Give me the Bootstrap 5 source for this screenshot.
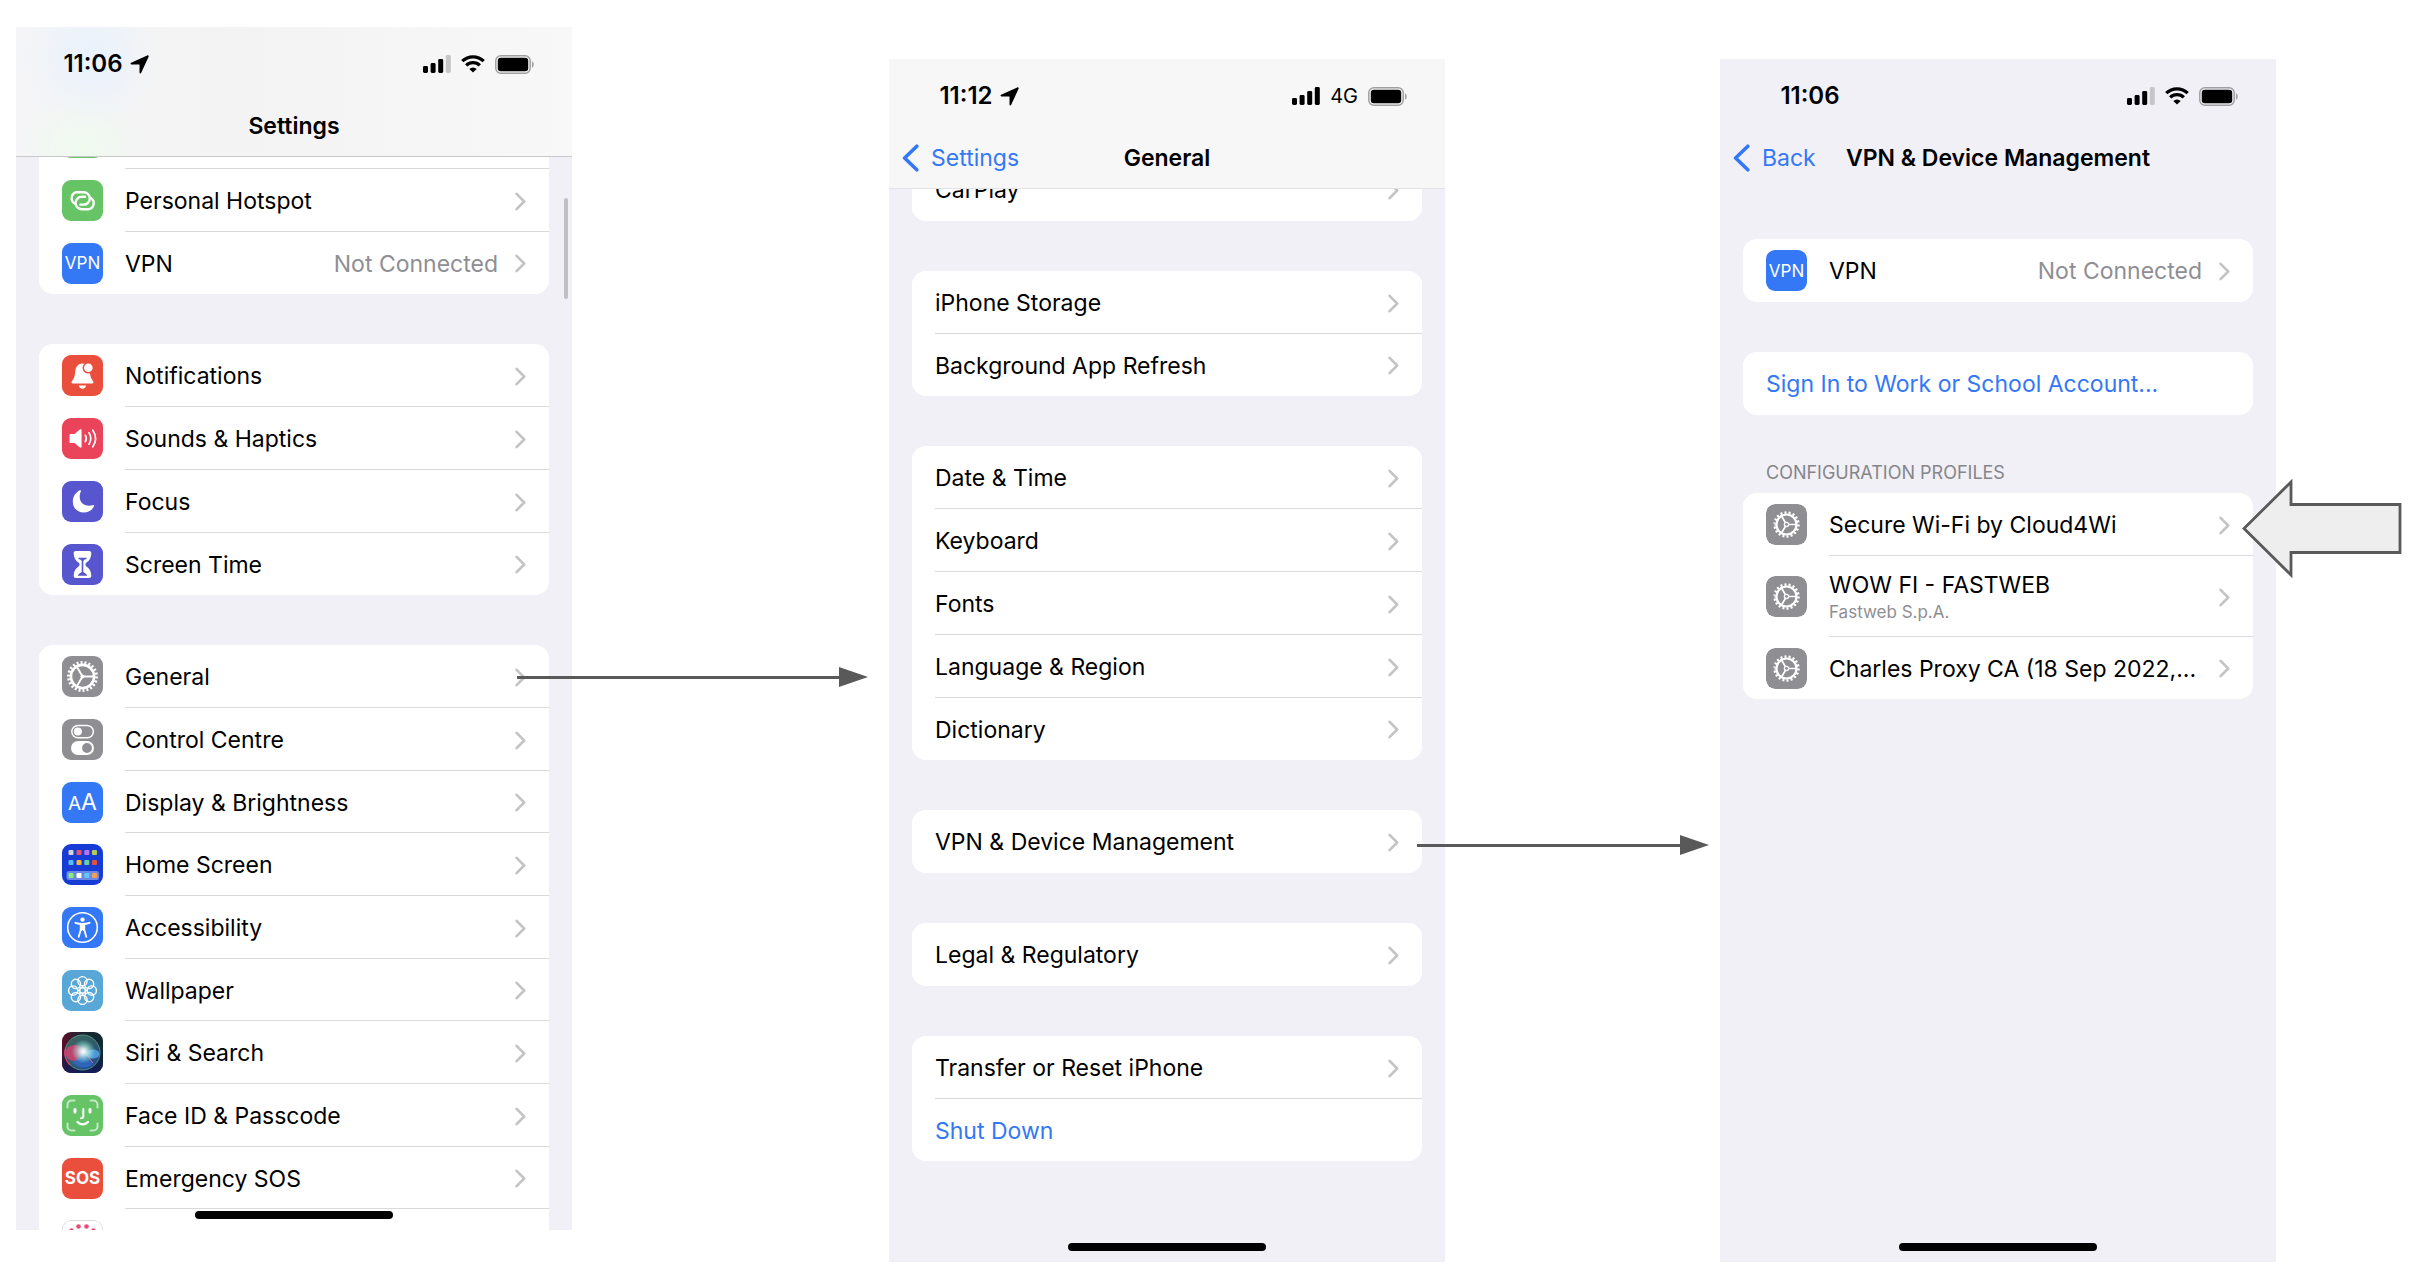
<!DOCTYPE html>
<html lang="en">
<head>
<meta charset="utf-8">
<meta name="viewport" content="width=device-width, initial-scale=1">
<title>VPN &amp; Device Management walkthrough</title>
<link href="https://cdn.jsdelivr.net/npm/bootstrap@5.3.0/dist/css/bootstrap.min.css" rel="stylesheet">
<style>
  :root { --ios-blue: #3478f6; --ios-grey: #8e8e93; --ios-bg: #f1f0f6; --ios-line: #d9d9dc; --ink: #595959; }
  body { font-family: Inter, "Liberation Sans", sans-serif; font-size: 23px; line-height: 30px; color: #000; background: #fff; }
  .flow { display: grid; grid-template-columns: minmax(440px, 556fr) minmax(0, 317fr) minmax(440px, 556fr) minmax(0, 275fr) minmax(440px, 556fr) minmax(0, 142fr); padding: 27px 0 0 16px; align-items: start; }
  .lowered { margin-top: 32px; }
  .phone { aspect-ratio: 390 / 844; background: var(--ios-bg); overflow: hidden; position: relative; }
  .bar { height: 130px; background: #f7f7f7; border-bottom: 1px solid #e3e3e6; }
  .bar-tint { background: radial-gradient(circle at 74px 30px, #e9f2fd 0, rgba(233,242,253,0) 70px), radial-gradient(circle at 66px 122px, #effaee 0, rgba(239,250,238,0) 62px), linear-gradient(90deg, #f5f5f7, #f3f3f3 40%, #f8f8f8); border-bottom-color: #c8c8cb; }
  .bar-plain { background: transparent; border-bottom-color: transparent; }
  .status { height: 74px; padding-right: 37px; }
  .clock { width: 180px; font-size: 24px; font-weight: 600; gap: 7px; }
  .signals { gap: 10px; }
  .nav-row { display: grid; grid-template-columns: 1fr auto 1fr; height: 50px; align-items: center; padding: 0 13px; }
  .nav-title { font-size: 23px; line-height: 30px; font-weight: 600; margin: 0; }
  .back { color: var(--ios-blue); gap: 12px; }
  .sheet { padding: 0 23px; gap: 50px; }
  .sheet-top { padding-top: 50px; }
  .scrolled-far { margin-top: -51px; }
  .scrolled-near { margin-top: -31px; }
  .pane { overflow: hidden; }
  .group { border-radius: 14px; background: #fff; overflow: hidden; }
  .cell { border: 0; padding: 0 0 0 23px; height: 63px; color: #000; background: #fff; gap: 22px; }
  .cell:last-child { height: 62px; }
  .cell:only-child { height: 63px; }
  .long-list .cell:nth-child(3n) { height: 62px; }
  .cell.cell-tall { height: 81px; }
  .cell-body { min-width: 0; border-bottom: 1px solid var(--ios-line); padding: 2px 23px 0 0; gap: 17px; }
  .cell:last-child .cell-body { border-bottom-color: transparent; }
  .value { color: var(--ios-grey); }
  .action { color: var(--ios-blue); }
  .sub { font-size: 17px; line-height: 24px; color: var(--ios-grey); }
  .section-title { font-size: 18px; line-height: 24px; color: #85858b; margin: -4px 0 8px 23px; font-weight: 400; }
  .tile { width: 41px; height: 41px; border-radius: 9px; flex: none; color: #fff; }
  .tile-green { background: #67c466; }
  .tile-vpn { background: #3478f6; font-size: 17px; }
  .tile-aa { background: #3478f6; font-size: 23px; line-height: 41px; }
  .tile-aa span { font-size: 19px; }
  .tile-sos { background: #ea4e3d; font-size: 17px; font-weight: 700; }
  .home { position: absolute; left: 50%; bottom: 11px; width: 198px; height: 8px; margin-left: -99px; border-radius: 4px; background: #000; }
  .scrollbar-thumb { position: absolute; right: 4px; top: 171px; width: 4px; height: 101px; border-radius: 2px; background: #bfbfc4; }
  .net { font-size: 20px; }
  .link-col { position: relative; height: 0; }
  .connector { position: absolute; z-index: 2; }
  .connector i { height: 3px; background: var(--ink); }
  .to-general { left: -55px; right: 21px; top: 640px; }
  .to-vpn { left: -28px; right: 11px; top: 808px; }
  .pointer { position: absolute; z-index: 2; left: -35px; top: 452px; }
  svg { display: block; flex: none; }
</style>
</head>
<body>
<svg width="0" height="0" class="position-absolute" aria-hidden="true">
  <defs>
    <symbol id="chev" viewBox="0 0 11 19"><path d="M1.6 1.8 9.2 9.5 1.6 17.2" fill="none" stroke="#c4c4c7" stroke-width="2.6" stroke-linecap="round" stroke-linejoin="round"/></symbol>
    <symbol id="backchev" viewBox="0 0 17 28"><path d="M14.8 2.2 2.6 14l12.2 11.8" fill="none" stroke="#3478f6" stroke-width="3.6" stroke-linecap="round" stroke-linejoin="round"/></symbol>
    <symbol id="loc" viewBox="0 0 19 19"><path d="M18.3.6c.5.2.5.6.3 1.100L11.200 17.800c-.5 1-1.700.8-1.700-.4V9.800c0-.3-.1-.4-.4-.4H1.500C.3 9.400.1 8.200 1.100 7.700L17.200.4c.4-.2.800-.1 1.100.2Z"/></symbol>
    <symbol id="sig3" viewBox="0 0 28 18"><rect x="0" y="11" width="5" height="7" rx="1.400"/><rect x="7.600" y="8" width="5" height="10" rx="1.400"/><rect x="15.200" y="4" width="5" height="14" rx="1.400"/><rect x="22.800" y="0" width="5" height="18" rx="1.400" fill="#c6c6c8"/></symbol>
    <symbol id="sig4" viewBox="0 0 28 18"><rect x="0" y="11" width="5" height="7" rx="1.400"/><rect x="7.600" y="8" width="5" height="10" rx="1.400"/><rect x="15.200" y="4" width="5" height="14" rx="1.400"/><rect x="22.800" y="0" width="5" height="18" rx="1.400"/></symbol>
    <symbol id="wifi" viewBox="0 0 24 18"><g fill="none" stroke="#000" stroke-width="3.300"><path d="M1.300 6.200a15.200 15.200 0 0 1 21.400 0"/><path d="M5.200 10.400a9.700 9.700 0 0 1 13.600 0"/></g><path d="M12 17.600 8.300 13.900a5.300 5.300 0 0 1 7.400 0Z"/></symbol>
    <symbol id="batt" viewBox="0 0 40 19"><rect x=".8" y=".8" width="34.400" height="17.400" rx="5" fill="none" stroke="#a0a0a2" stroke-width="1.500"/><rect x="2.800" y="2.800" width="30.400" height="13.400" rx="3"/><path d="M37 6.300c2.300.9 2.300 5.500 0 6.400Z" fill="#a0a0a2"/></symbol>
    <symbol id="gear" viewBox="0 0 41 41"><g fill="none" stroke="#fff"><circle cx="20.500" cy="20.500" r="14" stroke-width="3" pathLength="44" stroke-dasharray="1 1"/><circle cx="20.500" cy="20.500" r="11.600" stroke-width="2.600"/><path d="M20.500 20.500H32M20.500 20.500 14.700 10.500M20.500 20.500 14.700 30.500" stroke-width="1.900"/></g><circle cx="20.500" cy="20.500" r="2" fill="#fff"/></symbol>
    <symbol id="gear-small" viewBox="0 0 41 41"><rect width="41" height="41" rx="9" fill="#8e8e93"/><g fill="none" stroke="#fff"><circle cx="20.500" cy="20.500" r="12" stroke-width="2.400" pathLength="36" stroke-dasharray="1 1"/><circle cx="20.500" cy="20.500" r="10" stroke-width="2.200"/><path d="M22.500 20.500H30M19.500 18.800 15.500 12M19.500 22.200 15.500 29" stroke-width="1.700"/><circle cx="20.500" cy="20.500" r="2.100" stroke-width="1.400"/></g></symbol>
    <radialGradient id="siriGlow"><stop offset="0" stop-color="#fff"/><stop offset=".25" stop-color="#e6fbff" stop-opacity=".85"/><stop offset="1" stop-color="#7fd" stop-opacity="0"/></radialGradient>
    <linearGradient id="siriBg" x1="0" y1="0" x2="1" y2="0"><stop offset="0" stop-color="#5a0f2c"/><stop offset=".5" stop-color="#1d2432"/><stop offset="1" stop-color="#102b33"/></linearGradient>
    <linearGradient id="siriLow" x1="0" y1="0" x2="0" y2="1"><stop offset=".4" stop-color="#14204a" stop-opacity="0"/><stop offset="1" stop-color="#141c58"/></linearGradient>
    <linearGradient id="siriOrb" x1="0" y1="0" x2="1" y2="1"><stop offset="0" stop-color="#3f7f6d"/><stop offset=".5" stop-color="#3d6f7c"/><stop offset="1" stop-color="#2353b8"/></linearGradient>
  </defs>
</svg>

<main class="flow">
  <section class="phone d-flex flex-column" aria-label="Settings">
    <header class="bar bar-tint flex-shrink-0">
      <div class="status d-flex align-items-center">
        <div class="clock d-flex align-items-center justify-content-center">11:06<svg width="19" height="19"><use href="#loc"/></svg></div>
        <div class="signals ms-auto d-flex align-items-center"><svg width="28" height="18"><use href="#sig3"/></svg><svg width="24" height="18"><use href="#wifi"/></svg><svg width="40" height="19"><use href="#batt"/></svg></div>
      </div>
      <div class="nav-row"><span></span><h1 class="nav-title">Settings</h1><span></span></div>
    </header>
    <div class="pane flex-grow-1">
      <div class="sheet scrolled-far d-flex flex-column">
        <div class="group list-group list-group-flush">
          <a href="#" class="cell list-group-item list-group-item-action d-flex align-items-center" aria-label="Mobile Data"><span class="tile tile-green"></span><span class="cell-body d-flex align-items-center flex-grow-1 h-100"></span></a>
          <a href="#" class="cell list-group-item list-group-item-action d-flex align-items-center">
            <svg class="tile" viewBox="0 0 41 41"><rect width="41" height="41" fill="#67c466"/><g fill="none" stroke="#fff" stroke-width="2.400" stroke-linecap="round"><path d="M12.600 23.500a6.200 6.200 0 0 1 1.800-11.300h7.200a6.200 6.200 0 0 1 0 12.400h-3.200"/><path d="M28.800 17.900a6.200 6.200 0 0 1-1.800 11.300h-7.200a6.200 6.200 0 0 1 0-12.400h3.200"/></g></svg>
            <span class="cell-body d-flex align-items-center flex-grow-1 h-100"><span>Personal Hotspot</span><svg class="ms-auto" width="11" height="19"><use href="#chev"/></svg></span></a>
          <a href="#" class="cell list-group-item list-group-item-action d-flex align-items-center">
            <span class="tile tile-vpn d-flex align-items-center justify-content-center">VPN</span>
            <span class="cell-body d-flex align-items-center flex-grow-1 h-100"><span>VPN</span><span class="value ms-auto">Not Connected</span><svg width="11" height="19"><use href="#chev"/></svg></span></a>
        </div>

        <div class="group list-group list-group-flush">
          <a href="#" class="cell list-group-item list-group-item-action d-flex align-items-center">
            <svg class="tile" viewBox="0 0 41 41"><rect width="41" height="41" fill="#ea4e3d"/><path d="M20.500 8.500c-4.300 0-6.700 3.400-7.200 7.500-.5 4.600-.9 6.800-2.800 9.300-1.500 1.900-1.300 3.200.4 3.200h19.200c1.700 0 1.900-1.300.4-3.200-1.900-2.500-2.300-4.700-2.800-9.300-.5-4.100-2.900-7.500-7.200-7.500ZM16.800 30.500h7.400c-.3 2-1.700 3.200-3.700 3.200s-3.400-1.200-3.700-3.200Z" fill="#fff"/><circle cx="26.300" cy="12.800" r="5.800" fill="#ea4e3d"/><circle cx="26.300" cy="12.800" r="4.300" fill="#fff"/></svg>
            <span class="cell-body d-flex align-items-center flex-grow-1 h-100"><span>Notifications</span><svg class="ms-auto" width="11" height="19"><use href="#chev"/></svg></span></a>
          <a href="#" class="cell list-group-item list-group-item-action d-flex align-items-center">
            <svg class="tile" viewBox="0 0 41 41"><rect width="41" height="41" fill="#ea445a"/><path d="M7.500 17.500c0-1 .5-1.500 1.500-1.500h3.600l5-4.300c1-.8 2-.4 2 .8v16c0 1.200-1 1.600-2 .8l-5-4.300H9c-1 0-1.500-.5-1.500-1.500Z" fill="#fff"/><g fill="none" stroke="#fff" stroke-width="1.700" stroke-linecap="round"><path d="M23.300 17.300c1.300 2 1.300 4.400 0 6.400M27 14.800c2.300 3.500 2.300 7.900 0 11.400M30.800 12.200c3.400 5.100 3.400 11.500 0 16.600"/></g></svg>
            <span class="cell-body d-flex align-items-center flex-grow-1 h-100"><span>Sounds &amp; Haptics</span><svg class="ms-auto" width="11" height="19"><use href="#chev"/></svg></span></a>
          <a href="#" class="cell list-group-item list-group-item-action d-flex align-items-center">
            <svg class="tile" viewBox="0 0 41 41"><rect width="41" height="41" fill="#5756ce"/><path d="M18 9.300c.7-.3 1.200.2.900.9-1 2.300-1.200 4-1.200 5.600 0 5.300 3.800 8.900 9.200 8.900 1.500 0 2.800-.2 4.200-.7.800-.3 1.300.2 1 .9-1.600 4-5.500 6.600-10.300 6.600-6.500 0-11-4.700-11-10.800 0-4.900 2.700-9.500 7.200-11.400Z" fill="#fff"/></svg>
            <span class="cell-body d-flex align-items-center flex-grow-1 h-100"><span>Focus</span><svg class="ms-auto" width="11" height="19"><use href="#chev"/></svg></span></a>
          <a href="#" class="cell list-group-item list-group-item-action d-flex align-items-center">
            <svg class="tile" viewBox="0 0 41 41"><rect width="41" height="41" fill="#5756ce"/><path d="M14 7h13c1.500 0 2.300.8 2.300 2.200 0 4.600-1.800 7.300-4.800 9.300-1.500 1-1.500 3 0 4 3 2 4.800 4.700 4.800 9.300 0 1.400-.8 2.200-2.300 2.200H14c-1.500 0-2.300-.8-2.300-2.200 0-4.600 1.800-7.300 4.800-9.300 1.500-1 1.500-3 0-4-3-2-4.800-4.700-4.800-9.300C11.700 7.800 12.500 7 14 7Z" fill="#fff"/><path d="M16.500 14.500h8M20.500 15v14.500" fill="none" stroke="#5756ce" stroke-width="1.600"/><path d="M17.300 14.500h6.400l-3.200 3ZM15.800 31.800c.2-1.400 2-2.600 4.700-4.300 2.700 1.700 4.500 2.900 4.700 4.300Z" fill="#5756ce"/></svg>
            <span class="cell-body d-flex align-items-center flex-grow-1 h-100"><span>Screen Time</span><svg class="ms-auto" width="11" height="19"><use href="#chev"/></svg></span></a>
        </div>

        <div class="group list-group list-group-flush long-list">
          <a href="#" class="cell list-group-item list-group-item-action d-flex align-items-center">
            <svg class="tile" viewBox="0 0 41 41"><rect width="41" height="41" fill="#8e8e93"/><use href="#gear"/></svg>
            <span class="cell-body d-flex align-items-center flex-grow-1 h-100"><span>General</span><svg class="ms-auto" width="11" height="19"><use href="#chev"/></svg></span></a>
          <a href="#" class="cell list-group-item list-group-item-action d-flex align-items-center">
            <svg class="tile" viewBox="0 0 41 41"><rect width="41" height="41" fill="#8e8e93"/><rect x="9.800" y="6.400" width="21.600" height="12.400" rx="6.200" fill="none" stroke="#fff" stroke-width="1.500"/><circle cx="15.900" cy="12.600" r="4" fill="#fff"/><rect x="9" y="22" width="23" height="14" rx="7" fill="#fff"/><circle cx="25" cy="29" r="4.900" fill="#8e8e93"/></svg>
            <span class="cell-body d-flex align-items-center flex-grow-1 h-100"><span>Control Centre</span><svg class="ms-auto" width="11" height="19"><use href="#chev"/></svg></span></a>
          <a href="#" class="cell list-group-item list-group-item-action d-flex align-items-center">
            <span class="tile tile-aa d-flex align-items-baseline justify-content-center"><span>A</span>A</span>
            <span class="cell-body d-flex align-items-center flex-grow-1 h-100"><span>Display &amp; Brightness</span><svg class="ms-auto" width="11" height="19"><use href="#chev"/></svg></span></a>
          <a href="#" class="cell list-group-item list-group-item-action d-flex align-items-center">
            <svg class="tile" viewBox="0 0 41 41"><rect width="41" height="41" fill="#173cd6"/><rect x="4.500" y="27" width="32.500" height="9" rx="2.500" fill="#6c87e6"/><g><rect x="6.500" y="6" width="5" height="5" rx="1" fill="#d4d4d2"/><rect x="14.500" y="6" width="5" height="5" rx="1" fill="#e85468"/><rect x="22.300" y="6" width="5" height="5" rx="1" fill="#b574f2"/><rect x="30" y="6" width="5" height="5" rx="1" fill="#b4cb58"/><rect x="6.500" y="16" width="5" height="5" rx="1" fill="#58bdf6"/><rect x="14.500" y="16" width="5" height="5" rx="1" fill="#f2b93c"/><rect x="22.300" y="16" width="5" height="5" rx="1" fill="#68cfa4"/><rect x="30" y="16" width="5" height="5" rx="1" fill="#e5503f"/><rect x="6.500" y="29" width="5" height="5" rx="1" fill="#83ee7b"/><rect x="14.500" y="29" width="5" height="5" rx="1" fill="#fff"/><rect x="22.300" y="29" width="5" height="5" rx="1" fill="#5ecbf7"/><rect x="30" y="29" width="5" height="5" rx="1" fill="#f0a055"/></g></svg>
            <span class="cell-body d-flex align-items-center flex-grow-1 h-100"><span>Home Screen</span><svg class="ms-auto" width="11" height="19"><use href="#chev"/></svg></span></a>
          <a href="#" class="cell list-group-item list-group-item-action d-flex align-items-center">
            <svg class="tile" viewBox="0 0 41 41"><rect width="41" height="41" fill="#3478f6"/><circle cx="20.500" cy="20.500" r="14.800" fill="none" stroke="#fff" stroke-width="1.600"/><circle cx="20.500" cy="12.600" r="2.200" fill="#fff"/><path d="M13.400 15.800c2.300.8 4.700 1.200 7.100 1.200s4.800-.4 7.100-1.200M18.700 17.500v5.500l-2 6.800M22.300 17.500v5.500l2 6.800" fill="none" stroke="#fff" stroke-width="1.800" stroke-linecap="round" stroke-linejoin="round"/><path d="M18 17h5v7h-1.500l-1-1-1 1H18Z" fill="#fff"/></svg>
            <span class="cell-body d-flex align-items-center flex-grow-1 h-100"><span>Accessibility</span><svg class="ms-auto" width="11" height="19"><use href="#chev"/></svg></span></a>
          <a href="#" class="cell list-group-item list-group-item-action d-flex align-items-center">
            <svg class="tile" viewBox="0 0 41 41"><rect width="41" height="41" fill="#59a7d7"/><g fill="none" stroke="#fff" stroke-width="1.400"><circle cx="20.500" cy="11.200" r="4.600"/><circle cx="27.100" cy="13.900" r="4.600"/><circle cx="29.800" cy="20.500" r="4.600"/><circle cx="27.100" cy="27.100" r="4.600"/><circle cx="20.500" cy="29.800" r="4.600"/><circle cx="13.900" cy="27.100" r="4.600"/><circle cx="11.200" cy="20.500" r="4.600"/><circle cx="13.900" cy="13.900" r="4.600"/><circle cx="20.500" cy="20.500" r="2.800"/><path d="M20.500 15.800v2M20.500 23.200v2M15.800 20.500h2M23.200 20.500h2M17.200 17.200l1.400 1.400M22.400 22.400l1.400 1.400M23.800 17.200l-1.400 1.400M18.600 22.400l-1.400 1.400"/></g></svg>
            <span class="cell-body d-flex align-items-center flex-grow-1 h-100"><span>Wallpaper</span><svg class="ms-auto" width="11" height="19"><use href="#chev"/></svg></span></a>
          <a href="#" class="cell list-group-item list-group-item-action d-flex align-items-center">
            <svg class="tile" viewBox="0 0 41 41"><rect width="41" height="41" fill="url(#siriBg)"/><rect width="41" height="41" fill="url(#siriLow)"/><circle cx="20.500" cy="20.500" r="17.500" fill="url(#siriOrb)" opacity=".75" stroke="#62b39d" stroke-width="1"/><path d="M3.500 16A17.500 17.500 0 0 0 8 33" fill="none" stroke="#d4476f" stroke-width="1.200"/><ellipse cx="12.500" cy="21" rx="9" ry="8" fill="#d3406f" opacity=".85"/><path d="M20 19c4 6 8 9 11 13-7 6-16 4-21-2 5-2 8-6 10-11Z" fill="#2e6fd8" opacity=".65"/><ellipse cx="31" cy="22" rx="6.500" ry="4.500" fill="#58a6ef" opacity=".8"/><path d="M22 20 31 31" stroke="#d46a98" stroke-width="1"/><circle cx="21.500" cy="19.500" r="12" fill="url(#siriGlow)"/></svg>
            <span class="cell-body d-flex align-items-center flex-grow-1 h-100"><span>Siri &amp; Search</span><svg class="ms-auto" width="11" height="19"><use href="#chev"/></svg></span></a>
          <a href="#" class="cell list-group-item list-group-item-action d-flex align-items-center">
            <svg class="tile" viewBox="0 0 41 41"><rect width="41" height="41" fill="#67c466"/><path d="M5.500 12.500v-3a4 4 0 0 1 4-4h3M28.500 5.500h3a4 4 0 0 1 4 4v3M35.500 28.500v3a4 4 0 0 1-4 4h-3M12.500 35.500h-3a4 4 0 0 1-4-4v-3" fill="none" stroke="#c3e8c2" stroke-width="2" stroke-linecap="round"/><g fill="none" stroke="#fff" stroke-linecap="round"><path d="M13 14.500v2.600M28 14.500v2.600" stroke-width="3"/><path d="M21.300 14v7c0 1.500-.8 2.300-2.300 2.300" stroke-width="2"/><path d="M15.500 27c2.900 3.200 7.600 3.200 10.500 0" stroke-width="2.200"/></g></svg>
            <span class="cell-body d-flex align-items-center flex-grow-1 h-100"><span>Face ID &amp; Passcode</span><svg class="ms-auto" width="11" height="19"><use href="#chev"/></svg></span></a>
          <a href="#" class="cell list-group-item list-group-item-action d-flex align-items-center">
            <span class="tile tile-sos d-flex align-items-center justify-content-center">SOS</span>
            <span class="cell-body d-flex align-items-center flex-grow-1 h-100"><span>Emergency SOS</span><svg class="ms-auto" width="11" height="19"><use href="#chev"/></svg></span></a>
          <a href="#" class="cell list-group-item list-group-item-action d-flex align-items-center" aria-label="Exposure Notifications">
            <svg class="tile" viewBox="0 0 41 41"><rect x=".5" y=".5" width="40" height="40" rx="8.500" fill="#fff" stroke="#d9d9dc"/><g fill="#ea4b77"><circle cx="16.500" cy="6.500" r="2.300"/><circle cx="24.500" cy="6.500" r="2.300"/><circle cx="9.500" cy="10.500" r="2.300"/><circle cx="31.500" cy="10.500" r="2.300"/></g></svg>
            <span class="cell-body flex-grow-1 h-100"></span></a>
        </div>
      </div>
    </div>
    <span class="scrollbar-thumb"></span>
    <span class="home"></span>
  </section>

  <div class="link-col"><div class="connector to-general d-flex align-items-center"><i class="flex-grow-1"></i><svg width="29" height="20"><path d="M0 0 29 10 0 20Z" fill="#595959"/></svg></div></div>

  <section class="phone lowered d-flex flex-column" aria-label="General">
    <header class="bar flex-shrink-0">
      <div class="status d-flex align-items-center">
        <div class="clock d-flex align-items-center justify-content-center">11:12<svg width="19" height="19"><use href="#loc"/></svg></div>
        <div class="signals ms-auto d-flex align-items-center"><svg width="28" height="18"><use href="#sig4"/></svg><span class="net">4G</span><svg width="40" height="19"><use href="#batt"/></svg></div>
      </div>
      <div class="nav-row"><a href="#" class="back d-flex align-items-center text-decoration-none"><svg width="17" height="28"><use href="#backchev"/></svg>Settings</a><h2 class="nav-title">General</h2><span></span></div>
    </header>
    <div class="pane flex-grow-1">
      <div class="sheet scrolled-near d-flex flex-column">
        <div class="group list-group list-group-flush">
          <a href="#" class="cell list-group-item list-group-item-action d-flex"><span class="cell-body d-flex align-items-center flex-grow-1"><span>CarPlay</span><svg class="ms-auto" width="11" height="19"><use href="#chev"/></svg></span></a>
        </div>
        <div class="group list-group list-group-flush">
          <a href="#" class="cell list-group-item list-group-item-action d-flex"><span class="cell-body d-flex align-items-center flex-grow-1"><span>iPhone Storage</span><svg class="ms-auto" width="11" height="19"><use href="#chev"/></svg></span></a>
          <a href="#" class="cell list-group-item list-group-item-action d-flex"><span class="cell-body d-flex align-items-center flex-grow-1"><span>Background App Refresh</span><svg class="ms-auto" width="11" height="19"><use href="#chev"/></svg></span></a>
        </div>
        <div class="group list-group list-group-flush">
          <a href="#" class="cell list-group-item list-group-item-action d-flex"><span class="cell-body d-flex align-items-center flex-grow-1"><span>Date &amp; Time</span><svg class="ms-auto" width="11" height="19"><use href="#chev"/></svg></span></a>
          <a href="#" class="cell list-group-item list-group-item-action d-flex"><span class="cell-body d-flex align-items-center flex-grow-1"><span>Keyboard</span><svg class="ms-auto" width="11" height="19"><use href="#chev"/></svg></span></a>
          <a href="#" class="cell list-group-item list-group-item-action d-flex"><span class="cell-body d-flex align-items-center flex-grow-1"><span>Fonts</span><svg class="ms-auto" width="11" height="19"><use href="#chev"/></svg></span></a>
          <a href="#" class="cell list-group-item list-group-item-action d-flex"><span class="cell-body d-flex align-items-center flex-grow-1"><span>Language &amp; Region</span><svg class="ms-auto" width="11" height="19"><use href="#chev"/></svg></span></a>
          <a href="#" class="cell list-group-item list-group-item-action d-flex"><span class="cell-body d-flex align-items-center flex-grow-1"><span>Dictionary</span><svg class="ms-auto" width="11" height="19"><use href="#chev"/></svg></span></a>
        </div>
        <div class="group list-group list-group-flush">
          <a href="#" class="cell list-group-item list-group-item-action d-flex"><span class="cell-body d-flex align-items-center flex-grow-1"><span>VPN &amp; Device Management</span><svg class="ms-auto" width="11" height="19"><use href="#chev"/></svg></span></a>
        </div>
        <div class="group list-group list-group-flush">
          <a href="#" class="cell list-group-item list-group-item-action d-flex"><span class="cell-body d-flex align-items-center flex-grow-1"><span>Legal &amp; Regulatory</span><svg class="ms-auto" width="11" height="19"><use href="#chev"/></svg></span></a>
        </div>
        <div class="group list-group list-group-flush">
          <a href="#" class="cell list-group-item list-group-item-action d-flex"><span class="cell-body d-flex align-items-center flex-grow-1"><span>Transfer or Reset iPhone</span><svg class="ms-auto" width="11" height="19"><use href="#chev"/></svg></span></a>
          <button type="button" class="cell list-group-item list-group-item-action d-flex"><span class="cell-body d-flex align-items-center flex-grow-1 h-100 action">Shut Down</span></button>
        </div>
      </div>
    </div>
    <span class="home"></span>
  </section>

  <div class="link-col"><div class="connector to-vpn d-flex align-items-center"><i class="flex-grow-1"></i><svg width="29" height="20"><path d="M0 0 29 10 0 20Z" fill="#595959"/></svg></div></div>

  <section class="phone lowered d-flex flex-column" aria-label="VPN and Device Management">
    <header class="bar bar-plain flex-shrink-0">
      <div class="status d-flex align-items-center">
        <div class="clock d-flex align-items-center justify-content-center">11:06</div>
        <div class="signals ms-auto d-flex align-items-center"><svg width="28" height="18"><use href="#sig3"/></svg><svg width="24" height="18"><use href="#wifi"/></svg><svg width="40" height="19"><use href="#batt"/></svg></div>
      </div>
      <div class="nav-row"><a href="#" class="back d-flex align-items-center text-decoration-none"><svg width="17" height="28"><use href="#backchev"/></svg>Back</a><h2 class="nav-title">VPN &amp; Device Management</h2><span></span></div>
    </header>
    <div class="pane flex-grow-1">
      <div class="sheet sheet-top d-flex flex-column">
        <div class="group list-group list-group-flush">
          <a href="#" class="cell list-group-item list-group-item-action d-flex align-items-center">
            <span class="tile tile-vpn d-flex align-items-center justify-content-center">VPN</span>
            <span class="cell-body d-flex align-items-center flex-grow-1 h-100"><span>VPN</span><span class="value ms-auto">Not Connected</span><svg width="11" height="19"><use href="#chev"/></svg></span></a>
        </div>
        <div class="group list-group list-group-flush">
          <button type="button" class="cell list-group-item list-group-item-action d-flex"><span class="cell-body d-flex align-items-center flex-grow-1 h-100 action">Sign In to Work or School Account...</span></button>
        </div>
        <div>
          <h3 class="section-title">CONFIGURATION PROFILES</h3>
          <div class="group list-group list-group-flush">
            <a href="#" class="cell list-group-item list-group-item-action d-flex align-items-center"><svg class="tile"><use href="#gear-small"/></svg><span class="cell-body d-flex align-items-center flex-grow-1 h-100"><span>Secure Wi-Fi by Cloud4Wi</span><svg class="ms-auto" width="11" height="19"><use href="#chev"/></svg></span></a>
            <a href="#" class="cell cell-tall list-group-item list-group-item-action d-flex align-items-center"><svg class="tile"><use href="#gear-small"/></svg><span class="cell-body d-flex align-items-center flex-grow-1 h-100"><span class="d-flex flex-column"><span>WOW FI - FASTWEB</span><span class="sub">Fastweb S.p.A.</span></span><svg class="ms-auto" width="11" height="19"><use href="#chev"/></svg></span></a>
            <a href="#" class="cell list-group-item list-group-item-action d-flex align-items-center"><svg class="tile"><use href="#gear-small"/></svg><span class="cell-body d-flex align-items-center flex-grow-1 h-100"><span class="text-nowrap">Charles Proxy CA (18 Sep 2022,...</span><svg class="ms-auto" width="11" height="19"><use href="#chev"/></svg></span></a>
          </div>
        </div>
      </div>
    </div>
    <span class="home"></span>
  </section>

  <div class="link-col"><svg class="pointer" width="162" height="99" viewBox="0 0 162 99"><path d="M3 49.500 50 3v22.500h109v48H50V96Z" fill="#eee" stroke="#595959" stroke-width="2.800"/></svg></div>
</main>
<script src="https://cdn.jsdelivr.net/npm/bootstrap@5.3.0/dist/js/bootstrap.bundle.min.js"></script>
</body>
</html>
